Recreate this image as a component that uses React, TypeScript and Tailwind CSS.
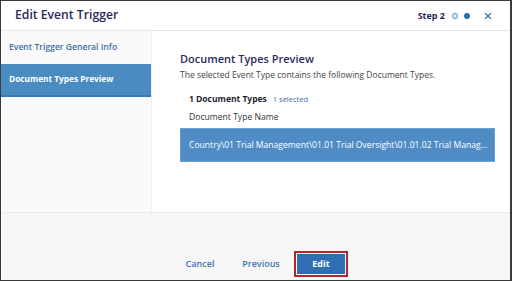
import React from 'react';
import { X } from 'lucide-react';

export default function App() {
  return (
    <div className="w-[512px] h-[281px] bg-white border border-[#3a3a3a] border-r-2 flex flex-col overflow-hidden" style={{ fontFamily: '"Open Sans", sans-serif' }}>
      {/* header */}
      <div className="h-[30px] flex items-center justify-between pl-[14px] pr-[17px] border-b border-[#e3e7ee] shrink-0">
        <h1 className="text-[12.2px] font-semibold text-[#2b2a5c] leading-none">Edit Event Trigger</h1>
        <div className="flex items-center">
          <span className="text-[9px] font-bold text-[#2b2a5c] mr-[7px]">Step 2</span>
          <span className="w-[6px] h-[6px] rounded-full border border-[#3f7cc0] mr-[6px]" />
          <span className="w-[6px] h-[6px] rounded-full bg-[#2d6fb5] mr-[13px]" />
          <X size={10} strokeWidth={2.8} className="text-[#2d6fb5]" />
        </div>
      </div>

      <div className="flex flex-1 min-h-0">
        {/* sidebar */}
        <div className="w-[151px] bg-[#fafafa] border-r border-[#f0f0f0] shrink-0">
          <div className="h-[33px] flex items-center pl-[8px] text-[8.6px] font-semibold text-[#3d6ea8]">
            Event Trigger General Info
          </div>
          <div className="h-[33px] flex items-center pl-[8px] bg-[#4a8bc1] border-b-2 border-[#3a77ae] text-[8.3px] font-bold text-white">
            Document Types Preview
          </div>
        </div>

        {/* main */}
        <div className="flex-1 min-w-0 pt-[20px] pl-[28px] pr-[15px]">
          <h2 className="text-[11px] font-semibold text-[#2b2a5c] leading-[16px]">Document Types Preview</h2>
          <p className="text-[8.5px] text-[#444] mt-[2px] leading-[12px]">The selected Event Type contains the following Document Types.</p>
          <div className="pl-[9px] mt-[12px] flex items-baseline gap-[6px] leading-[12px]">
            <span className="text-[8.5px] font-bold text-[#1f1f33]">1 Document Types</span>
            <span className="text-[7.5px] text-[#3d6ea8]">1 selected</span>
          </div>
          <div className="pl-[9px] mt-[6px] text-[8.6px] text-[#333] leading-[12px]">Document Type Name</div>
          <div className="mt-[5px] h-[34px] bg-[#4f8cc6] border border-[#6aa0d2] flex items-center pl-[8px] pr-[4px]">
            <span className="text-[8.6px] text-white truncate">Country\01 Trial Management\01.01 Trial Oversight\01.01.02 Trial Management Plan</span>
          </div>
        </div>
      </div>

      {/* footer */}
      <div className="h-[68px] bg-[#f7f7f7] border-t border-[#ececec] shrink-0 flex items-end pb-[3px] pl-[173px]">
        <button className="text-[9px] font-semibold text-[#3f75b1] w-[52px] h-[26px]">Cancel</button>
        <button className="text-[9px] font-semibold text-[#3f75b1] w-[52px] h-[26px] ml-[9px]">Previous</button>
        <div className="ml-[7px] border-2 border-[#b3262c] p-[1px]">
          <button className="w-[48px] h-[20px] bg-[#2f6eb2] text-white text-[9px] font-bold block">Edit</button>
        </div>
      </div>
    </div>
  );
}
